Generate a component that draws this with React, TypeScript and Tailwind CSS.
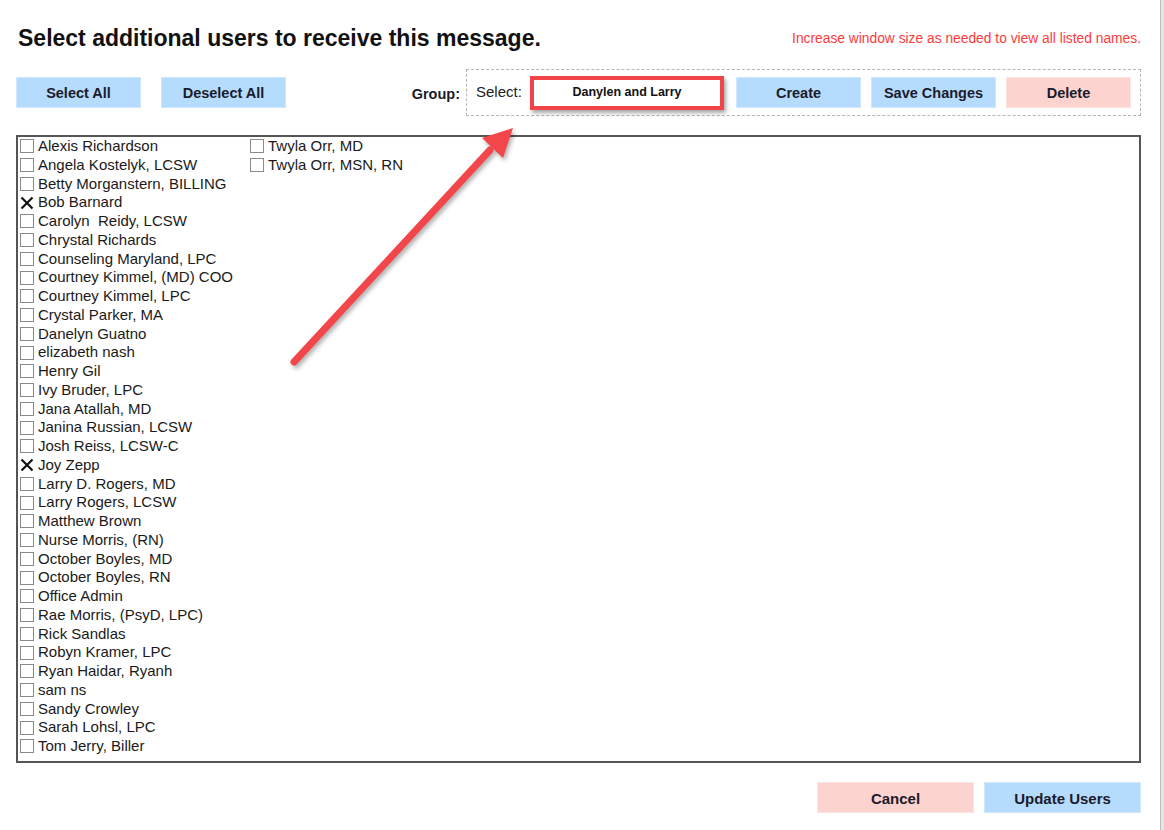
import React from 'react';

const col1 = [
  'Alexis Richardson',
  'Angela Kostelyk, LCSW',
  'Betty Morganstern, BILLING',
  'Bob Barnard',
  'Carolyn  Reidy, LCSW',
  'Chrystal Richards',
  'Counseling Maryland, LPC',
  'Courtney Kimmel, (MD) COO',
  'Courtney Kimmel, LPC',
  'Crystal Parker, MA',
  'Danelyn Guatno',
  'elizabeth nash',
  'Henry Gil',
  'Ivy Bruder, LPC',
  'Jana Atallah, MD',
  'Janina Russian, LCSW',
  'Josh Reiss, LCSW-C',
  'Joy Zepp',
  'Larry D. Rogers, MD',
  'Larry Rogers, LCSW',
  'Matthew Brown',
  'Nurse Morris, (RN)',
  'October Boyles, MD',
  'October Boyles, RN',
  'Office Admin',
  'Rae Morris, (PsyD, LPC)',
  'Rick Sandlas',
  'Robyn Kramer, LPC',
  'Ryan Haidar, Ryanh',
  'sam ns',
  'Sandy Crowley',
  'Sarah Lohsl, LPC',
  'Tom Jerry, Biller',
];

const col2 = ['Twyla Orr, MD', 'Twyla Orr, MSN, RN'];

const checked = ['Bob Barnard', 'Joy Zepp'];

function Box({ on }: { on: boolean }) {
  if (on) {
    return (
      <svg width="14" height="14" viewBox="0 0 14 14" className="shrink-0">
        <path d="M1.5 1.5 L12.5 12.5 M12.5 1.5 L1.5 12.5" stroke="#111" strokeWidth="2.2" />
      </svg>
    );
  }
  return <span className="w-[14px] h-[14px] shrink-0 border border-[#8a8a8a] bg-white" />;
}

function UserRow({ name }: { name: string }) {
  return (
    <label className="flex items-center h-[18.75px] gap-[4px] whitespace-pre">
      <Box on={checked.includes(name)} />
      <span>{name}</span>
    </label>
  );
}

const blueBtn =
  'h-[31px] pt-[3px] bg-[#b5dbfd] border border-[#cfe6fb] text-[14.5px] font-bold text-[#1b1b2b] flex items-center justify-center';
const pinkBtn =
  'h-[31px] pt-[3px] bg-[#fdd3cf] border border-[#fde3e0] text-[14.5px] font-bold text-[#1b1b2b] flex items-center justify-center';

export default function App() {
  return (
    <div
      className="relative w-[1164px] h-[830px] bg-white overflow-hidden flex"
      style={{ fontFamily: '"Liberation Sans", Arial, sans-serif' }}
    >
      <div className="w-[1160px] flex flex-col pl-[16px] pr-[19px]">
        {/* Header */}
        <div className="flex items-end justify-between h-[55px] pb-[5px]">
          <h1 className="text-[23px] font-bold text-[#111] pl-[2px] leading-none">
            Select additional users to receive this message.
          </h1>
          <p className="text-[13.8px] text-[#ff3a3a] pb-[4px] leading-none">
            Increase window size as needed to view all listed names.
          </p>
        </div>

        {/* Toolbar */}
        <div className="flex items-start mt-[14px] h-[47px]">
          <button className={`${blueBtn} w-[125px] mt-[8px]`}>Select All</button>
          <button className={`${blueBtn} w-[125px] mt-[8px] ml-[20px]`}>Deselect All</button>
          <span className="ml-auto mt-[15px] text-[14.5px] font-bold text-[#1b1b2b] mr-[6px]">Group:</span>
          <div className="w-[675px] h-[47px] border border-dashed border-[#b5b5b5] flex items-center pl-[9px]">
            <span className="w-[50px] text-[15px] text-[#222]">Select:</span>
            <div className="ml-[4px] w-[194px] h-[34px] border-[4px] border-[#f0434a] shadow-[2px_3px_4px_rgba(0,0,0,0.35)] bg-white flex items-center justify-center">
              <span className="text-[12.5px] font-bold text-[#111]">Danylen and Larry</span>
            </div>
            <button className={`${blueBtn} w-[125px] ml-[12px]`}>Create</button>
            <button className={`${blueBtn} w-[125px] ml-[10px]`}>Save Changes</button>
            <button className={`${pinkBtn} w-[125px] ml-[10px]`}>Delete</button>
          </div>
        </div>

        {/* User list */}
        <div className="mt-[19px] h-[628px] border-2 border-[#555] flex pl-[2px] text-[15px] text-[#1a1a1a]">
          <div className="w-[230px] flex flex-col">
            {col1.map((n) => (
              <UserRow key={n} name={n} />
            ))}
          </div>
          <div className="flex flex-col">
            {col2.map((n) => (
              <UserRow key={n} name={n} />
            ))}
          </div>
        </div>

        {/* Footer */}
        <div className="flex justify-end gap-[10px] mt-[19px]">
          <button className={`${pinkBtn} w-[157px] text-[15px]`}>Cancel</button>
          <button className={`${blueBtn} w-[157px] text-[15px]`}>Update Users</button>
        </div>
      </div>

      {/* window edge */}
      <div className="w-[4px] bg-[#e6e6e6] border-l border-[#bdbdbd]" />

      {/* annotation arrow */}
      <svg
        className="absolute left-0 top-0 pointer-events-none"
        width="1164"
        height="830"
        style={{ filter: 'drop-shadow(2px 3px 2px rgba(0,0,0,0.3))' }}
      >
        <line x1="294" y1="362" x2="490" y2="150" stroke="#f2464a" strokeWidth="7" strokeLinecap="round" />
        <polygon points="513,128 482,138 503,158" fill="#f2464a" />
      </svg>
    </div>
  );
}
